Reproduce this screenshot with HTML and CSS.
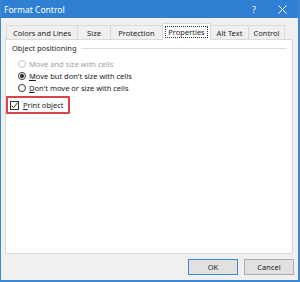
FILE: index.html
```html
<!DOCTYPE html>
<html lang="en">
<head>
    <meta charset="UTF-8">
    <meta name="viewport" content="width=device-width, initial-scale=1.0">
    <title>Format Control</title>
    <link rel="stylesheet" href="styles.css">
</head>
<body>
    <div class="window">
        <div class="titlebar">
            <span class="title">Format Control</span>
            <span class="help">?</span>
            <span class="close">
                <svg width="9" height="9" viewBox="0 0 9 9"><path d="M0.5 0.5 L8.5 8.5 M8.5 0.5 L0.5 8.5" stroke="#fff" stroke-width="1"/></svg>
            </span>
        </div>

        <div class="tabs">
            <div class="tab tab-colors">Colors and Lines</div>
            <div class="tab tab-size">Size</div>
            <div class="tab tab-protection">Protection</div>
            <div class="tab tab-properties active"><span class="focus">Properties</span></div>
            <div class="tab tab-alt">Alt Text</div>
            <div class="tab tab-control">Control</div>
        </div>

        <div class="panel">
            <div class="group-title">
                <span>Object positioning</span>
                <div class="group-line"></div>
            </div>
            <div class="radio-list">
                <div class="radio disabled"><span class="circle"></span>Move and size with cells</div>
                <div class="radio"><span class="circle checked"></span><span><u>M</u>ove but don't size with cells</span></div>
                <div class="radio"><span class="circle"></span><span><u>D</u>on't move or size with cells</span></div>
            </div>
            <div class="highlight">
                <span class="checkbox">
                    <svg width="9" height="9" viewBox="0 0 9 9"><path d="M1.5 4.5 L3.5 6.8 L7.6 1.6" fill="none" stroke="#333" stroke-width="1"/></svg>
                </span>
                <span><u>P</u>rint object</span>
            </div>
        </div>

        <div class="footer">
            <button class="btn btn-default">OK</button>
            <button class="btn">Cancel</button>
        </div>
    </div>
</body>
</html>
```

FILE: styles.css
```css
html, body {
    margin: 0;
    padding: 0;
}

body {
    width: 300px;
    height: 282px;
    overflow: hidden;
    background: #f0f0f0;
    font-family: "Noto Sans", "Open Sans", sans-serif;
    font-size: 7.5px;
    color: #1a1a1a;
}

.window {
    width: 300px;
    height: 282px;
    box-sizing: border-box;
    border: 1px solid #3b87d6;
    border-top: none;
    border-right-width: 2px;
    border-bottom-width: 2px;
    background: #f0f0f0;
    display: flex;
    flex-direction: column;
}

.titlebar {
    height: 18px;
    background: #2f7fd3;
    color: #fff;
    display: flex;
    align-items: center;
    padding-left: 3px;
    font-size: 8.5px;
}

.title {
    flex: 1;
}

.help {
    font-size: 9px;
    margin-right: 22px;
}

.close {
    display: flex;
    margin-right: 11px;
}

.tabs {
    display: flex;
    margin: 5px 0 0 5px;
    height: 16px;
    align-items: flex-end;
}

.tab {
    height: 14px;
    box-sizing: border-box;
    border: 1px solid #dadada;
    border-bottom: none;
    border-left: none;
    background: #f0f0f0;
    display: flex;
    align-items: center;
    justify-content: center;
    color: #222;
    white-space: nowrap;
}

.tab-colors {
    width: 72px;
    border-left: 1px solid #dadada;
}

.tab-size {
    width: 33px;
}

.tab-protection {
    width: 52px;
}

.tab-properties {
    width: 49px;
}

.tab-alt {
    width: 38px;
}

.tab-control {
    width: 36px;
}

.tab.active {
    background: #fff;
    border-left: 1px solid #dadada;
    margin-left: -1px;
    margin-bottom: -1px;
    position: relative;
    z-index: 1;
    height: 17px;
}

.focus {
    border: 1px dotted #333;
    padding: 0 2px;
    line-height: 10px;
}

.panel {
    margin: 0 5px 0 4px;
    height: 215px;
    box-sizing: border-box;
    background: #fff;
    border: 1px solid #dadada;
    padding: 3px 5px 0 0;
}

.group-title {
    display: flex;
    align-items: center;
    gap: 4px;
    padding-left: 6px;
    height: 10px;
}

.group-line {
    flex: 1;
    height: 1px;
    background: #dcdcdc;
}

.radio-list {
    display: flex;
    flex-direction: column;
    padding: 5px 0 0 12px;
}

.radio {
    display: flex;
    align-items: center;
    height: 12px;
    gap: 3px;
    white-space: nowrap;
}

.radio.disabled {
    color: #a0a0a0;
}

.circle {
    width: 8px;
    height: 8px;
    box-sizing: border-box;
    border: 1px solid #333;
    border-radius: 50%;
    background: #fff;
    display: flex;
    align-items: center;
    justify-content: center;
}

.radio.disabled .circle {
    border-color: #c4c4c4;
}

.circle.checked::after {
    content: "";
    width: 4px;
    height: 4px;
    border-radius: 50%;
    background: #222;
}

.highlight {
    display: inline-flex;
    align-self: flex-start;
    align-items: center;
    gap: 4px;
    height: 18px;
    box-sizing: border-box;
    margin-top: 2px;
    border: 2px solid #d9434a;
    border-radius: 1px;
    padding: 0 4px 0 2px;
    white-space: nowrap;
}

.checkbox {
    width: 9px;
    height: 9px;
    box-sizing: border-box;
    border: 1px solid #333;
    display: flex;
    align-items: center;
    justify-content: center;
}

.checkbox svg {
    flex: none;
}

.footer {
    flex: 1;
    display: flex;
    justify-content: flex-end;
    align-items: center;
    gap: 6px;
    padding-right: 4px;
}

.btn {
    width: 50px;
    height: 16px;
    box-sizing: border-box;
    border: 1px solid #adadad;
    background: #e1e1e1;
    font-family: "Noto Sans", "Open Sans", sans-serif;
    font-size: 7.5px;
    color: #222;
    padding: 0;
}

.btn-default {
    border: 1px solid #3a86d4;
}
```
